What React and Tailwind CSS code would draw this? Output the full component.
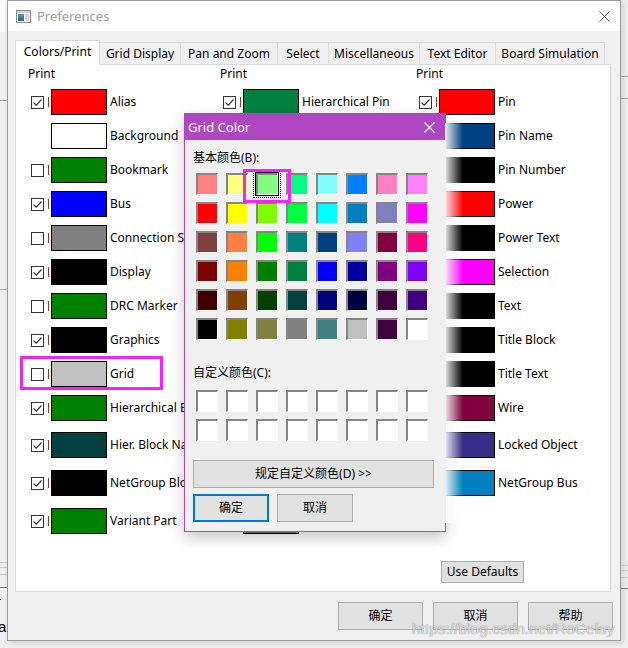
import React from 'react';

const leftRows = [
  { label: 'Alias', color: '#ff0000', cb: true, mt: '' },
  { label: 'Background', color: '#ffffff', cb: null, mt: 'mt-[8px]' },
  { label: 'Bookmark', color: '#008000', cb: false, mt: 'mt-[8px]' },
  { label: 'Bus', color: '#0000ff', cb: true, mt: 'mt-[8px]' },
  { label: 'Connection Stub', color: '#808080', cb: false, mt: 'mt-[8px]' },
  { label: 'Display', color: '#000000', cb: true, mt: 'mt-[8px]' },
  { label: 'DRC Marker', color: '#008000', cb: false, mt: 'mt-[8px]' },
  { label: 'Graphics', color: '#000000', cb: true, mt: 'mt-[8px]' },
  { label: 'Grid', color: '#c0c0c0', cb: false, mt: 'mt-[8px]', hl: true },
  { label: 'Hierarchical Block', color: '#008000', cb: true, mt: 'mt-[8px]' },
  { label: 'Hier. Block Name', color: '#004040', cb: true, mt: 'mt-[11px]' },
  { label: 'NetGroup Block', color: '#000000', cb: true, mt: 'mt-[12px]' },
  { label: 'Variant Part', color: '#008000', cb: true, mt: 'mt-[12px]' },
];

const midRows = [
  { label: 'Hierarchical Pin', color: '#008040', cb: true, mt: '' },
  { label: 'Junction', color: '#0000ff', cb: true, mt: 'mt-[8px]' },
  { label: 'Net Alias', color: '#008000', cb: true, mt: 'mt-[8px]' },
  { label: 'NetGroup Pin', color: '#000000', cb: true, mt: 'mt-[8px]' },
  { label: 'No Connect', color: '#000000', cb: true, mt: 'mt-[8px]' },
  { label: 'Off-Page', color: '#008000', cb: true, mt: 'mt-[8px]' },
  { label: 'Part', color: '#800000', cb: true, mt: 'mt-[8px]' },
  { label: 'Part Body', color: '#ffffc0', cb: true, mt: 'mt-[8px]' },
  { label: 'Part Ref', color: '#000000', cb: true, mt: 'mt-[8px]' },
  { label: 'Part Value', color: '#000000', cb: true, mt: 'mt-[8px]' },
  { label: 'Part Text', color: '#000000', cb: true, mt: 'mt-[11px]' },
  { label: 'Power Pin', color: '#000000', cb: true, mt: 'mt-[12px]' },
  { label: 'Pin Shape', color: '#808080', cb: true, mt: 'mt-[12px]' },
];

const rightRows = [
  { label: 'Pin', color: '#ff0000', cb: true, mt: '' },
  { label: 'Pin Name', color: '#004080', cb: true, mt: 'mt-[8px]' },
  { label: 'Pin Number', color: '#000000', cb: true, mt: 'mt-[8px]' },
  { label: 'Power', color: '#ff0000', cb: true, mt: 'mt-[8px]' },
  { label: 'Power Text', color: '#000000', cb: true, mt: 'mt-[8px]' },
  { label: 'Selection', color: '#ff00ff', cb: true, mt: 'mt-[8px]' },
  { label: 'Text', color: '#000000', cb: true, mt: 'mt-[8px]' },
  { label: 'Title Block', color: '#000000', cb: true, mt: 'mt-[8px]' },
  { label: 'Title Text', color: '#000000', cb: true, mt: 'mt-[8px]' },
  { label: 'Wire', color: '#800040', cb: true, mt: 'mt-[8px]' },
  { label: 'Locked Object', color: '#372c88', cb: true, mt: 'mt-[11px]' },
  { label: 'NetGroup Bus', color: '#0080c0', cb: true, mt: 'mt-[12px]' },
];

const basic = [
  '#ff8080', '#ffff80', '#80ff80', '#00ff80', '#80ffff', '#0080ff', '#ff80c0', '#ff80ff',
  '#ff0000', '#ffff00', '#80ff00', '#00ff40', '#00ffff', '#0080c0', '#8080c0', '#ff00ff',
  '#804040', '#ff8040', '#00ff00', '#008080', '#004080', '#8080ff', '#800040', '#ff0080',
  '#800000', '#ff8000', '#008000', '#008040', '#0000ff', '#0000a0', '#800080', '#8000ff',
  '#400000', '#804000', '#004000', '#004040', '#000080', '#000040', '#400040', '#400080',
  '#000000', '#808000', '#808040', '#808080', '#408080', '#c0c0c0', '#400040', '#ffffff',
];

function Check({ checked }) {
  return (
    <div className="w-[13px] h-[13px] border border-[#333333] bg-white flex items-center justify-center">
      {checked && (
        <svg width="11" height="11" viewBox="0 0 11 11">
          <path d="M1.5 5.5 L4.2 8.2 L9.5 2.5" fill="none" stroke="#333333" strokeWidth="1.2" />
        </svg>
      )}
    </div>
  );
}

function Row({ r }) {
  return (
    <div className={`relative h-[26px] flex items-center ${r.mt}`}>
      {r.hl && (
        <div className="absolute left-[-8px] top-[-5px] w-[143px] h-[34px] border-[3px] border-[#f224f2]" />
      )}
      <div className="ml-[3px] w-[13px] h-[13px]">{r.cb !== null && <Check checked={r.cb} />}</div>
      <div className={`ml-[4px] w-px h-[10px] ${r.cb !== null ? 'bg-[#a0341c]' : ''}`} />
      <div className="ml-[2px] w-[56px] h-[26px] border border-black" style={{ backgroundColor: r.color }} />
      <div className="ml-[3px] whitespace-nowrap leading-[16px]">{r.label}</div>
    </div>
  );
}

function Column({ rows, w }) {
  return (
    <div className={`flex flex-col ${w}`}>
      <div className="h-[16px] leading-[16px]">Print</div>
      <div className="mt-[7px] flex flex-col">
        {rows.map((r, i) => (
          <Row key={i} r={r} />
        ))}
      </div>
    </div>
  );
}

function Cell({ color }) {
  return (
    <div
      className="w-[22px] h-[22px] border-t-2 border-l-2 border-r border-b border-t-[#858585] border-l-[#858585] border-r-white border-b-white"
      style={{ backgroundColor: color }}
    />
  );
}

function Tab({ label, w, selected }) {
  if (selected) {
    return (
      <div className={`relative z-10 -mb-px h-[25px] ${w} bg-white border border-b-0 border-[#d9d9d9] flex items-start justify-center pt-[3px] leading-[16px]`}>
        {label}
      </div>
    );
  }
  return (
    <div className={`-ml-px h-[22px] ${w} bg-[#f0f0f0] border border-b-0 border-[#d9d9d9] flex items-center justify-center leading-[16px]`}>
      {label}
    </div>
  );
}

function Btn({ children, w, h, extra = '' }) {
  return (
    <div className={`${w} ${h} bg-[#e1e1e1] border border-[#adadad] flex items-center justify-center ${extra}`}>{children}</div>
  );
}

export default function App() {
  return (
    <div className="relative w-[628px] h-[648px] bg-[#f0f0f0] flex overflow-hidden text-[12px] text-black font-['Noto_Sans','Noto_Sans_CJK_SC',sans-serif]">
      {/* background app, left strip */}
      <div className="w-[7px] flex flex-col bg-[#f0f0f0] overflow-hidden">
        <div className="h-[32px] bg-[#fbfbfb]" />
        <div className="h-[68px]" />
        <div className="h-px bg-[#a0a0a0]" />
        <div className="h-[188px]" />
        <div className="h-px bg-[#b0b0b0]" />
        <div className="h-[272px]" />
        <div className="h-px bg-[#c8c8c8]" />
        <div className="h-[4px]" />
        <div className="h-px bg-[#c8c8c8]" />
        <div className="h-[6px]" />
        <div className="h-px bg-[#c8c8c8]" />
        <div className="h-[12px]" />
        <div className="h-px bg-[#777777]" />
        <div className="h-[11px]" />
        <div className="h-px w-px bg-black" />
        <div className="h-[18px]" />
        <div className="h-[18px] leading-[18px] text-[15px] -ml-[2px] font-['Liberation_Sans',sans-serif]">a</div>
      </div>

      {/* main window */}
      <div className="w-[614px] h-[641px] border border-[#9b9b9b] bg-[#f0f0f0] flex flex-col shadow-[2px_2px_6px_rgba(0,0,0,0.15)]">
        <div className="h-[30px] bg-white flex items-center pl-[8px] pr-[10px]">
          <svg width="15" height="13" viewBox="0 0 15 13">
            <defs>
              <linearGradient id="ig" x1="0" y1="0" x2="0" y2="1">
                <stop offset="0" stopColor="#4aa0a8" />
                <stop offset="1" stopColor="#2d5d8c" />
              </linearGradient>
            </defs>
            <rect x="0.5" y="0.5" width="14" height="12" fill="#ffffff" stroke="#8a8a8a" />
            <rect x="1" y="1" width="13" height="2" fill="#c9d2db" />
            <rect x="2" y="4" width="6" height="7" fill="url(#ig)" />
            <rect x="9" y="4" width="4" height="7" fill="#d5d5d5" />
          </svg>
          <div className="ml-[6px] text-[13px] text-[#9a9a9a] leading-[16px]">Preferences</div>
          <div className="flex-1" />
          <svg width="11" height="11" viewBox="0 0 11 11">
            <path d="M0.5 0.5 L10.5 10.5 M10.5 0.5 L0.5 10.5" stroke="#555555" strokeWidth="1" />
          </svg>
        </div>

        <div className="pt-[9px] pl-[7px] flex flex-col">
          <div className="h-[24px] flex items-end">
            <Tab label="Colors/Print" w="w-[85px]" selected />
            <Tab label="Grid Display" w="w-[82px]" />
            <Tab label="Pan and Zoom" w="w-[98px]" />
            <Tab label="Select" w="w-[52px]" />
            <Tab label="Miscellaneous" w="w-[92px]" />
            <Tab label="Text Editor" w="w-[77px]" />
            <Tab label="Board Simulation" w="w-[110px]" />
          </div>
          <div className="w-[596px] h-[528px] border border-[#d9d9d9] bg-white flex flex-col pt-[1px] pl-[12px]">
            <div className="flex">
              <Column rows={leftRows} w="w-[192px]" />
              <Column rows={midRows} w="w-[196px]" />
              <Column rows={rightRows} w="w-[170px]" />
            </div>
            <Btn w="w-[83px]" h="h-[22px]" extra="mt-[27px] ml-[413px]">Use Defaults</Btn>
          </div>
          <div className="mt-[10px] flex justify-end gap-[10px] pr-[7px]">
            <Btn w="w-[85px]" h="h-[28px]">确定</Btn>
            <Btn w="w-[85px]" h="h-[28px]">取消</Btn>
            <Btn w="w-[85px]" h="h-[28px]">帮助</Btn>
          </div>
        </div>
      </div>

      {/* background app, right strip */}
      <div className="flex-1 flex flex-col">
        <div className="h-[76px]" />
        <div className="h-px bg-[#a0a0a0]" />
        <div className="h-[21px]" />
        <div className="h-px bg-[#a0a0a0]" />
        <div className="h-[466px]" />
        <div className="h-px bg-[#c8c8c8]" />
        <div className="h-[4px]" />
        <div className="h-px bg-[#c8c8c8]" />
        <div className="h-[6px]" />
        <div className="h-px bg-[#c8c8c8]" />
        <div className="h-[10px]" />
        <div className="h-px bg-[#777777]" />
      </div>

      {/* Grid Color dialog */}
      <div className="absolute left-[184px] top-[113px] w-[262px] h-[419px] border border-[#ae47c1] bg-[#f0f0f0] flex flex-col shadow-[0_6px_14px_rgba(0,0,0,0.22)]">
        <div className="absolute left-full top-[9px] w-[18px] h-[400px] bg-gradient-to-r from-white/90 to-white/0" />
        <div className="h-[26px] bg-[#ae47c1] flex items-center pl-[3px] pr-[10px] text-white">
          <div className="text-[13px] leading-[16px]">Grid Color</div>
          <div className="flex-1" />
          <svg width="11" height="11" viewBox="0 0 11 11">
            <path d="M0.5 0.5 L10.5 10.5 M10.5 0.5 L0.5 10.5" stroke="#ffffff" strokeWidth="1.2" />
          </svg>
        </div>
        <div className="relative flex flex-col">
          <div className="mt-[10px] ml-[8px] h-[16px] leading-[16px]">基本颜色(B):</div>
          <div className="mt-[7px] ml-[11px] grid grid-cols-[repeat(8,22px)] gap-x-[8px] gap-y-[7px]">
            {basic.map((c, i) => (
              <div key={i} className="relative">
                {i === 2 && (
                  <>
                    <div className="absolute -inset-[3px] border border-dotted border-black" />
                    <div className="absolute -inset-[1px] border border-black" />
                  </>
                )}
                <Cell color={c} />
              </div>
            ))}
          </div>
          <div className="absolute left-[58px] top-[29px] w-[48px] h-[34px] border-[3px] border-[#f224f2]" />
          <div className="mt-[25px] ml-[8px] h-[16px] leading-[16px]">自定义颜色(C):</div>
          <div className="mt-[9px] ml-[11px] grid grid-cols-[repeat(8,22px)] gap-x-[8px] gap-y-[7px]">
            {Array.from({ length: 16 }).map((_, i) => (
              <Cell key={i} color="#ffffff" />
            ))}
          </div>
          <Btn w="w-[241px]" h="h-[28px]" extra="mt-[19px] ml-[8px]">规定自定义颜色(D) &gt;&gt;</Btn>
          <div className="mt-[6px] ml-[8px] flex gap-[8px]">
            <div className="w-[76px] h-[28px] bg-[#e1e1e1] border-2 border-[#0078d7] flex items-center justify-center">确定</div>
            <Btn w="w-[76px]" h="h-[28px]">取消</Btn>
          </div>
        </div>
      </div>

      {/* watermark */}
      <div className="absolute left-[412px] top-[620px] text-[15.5px] leading-[18px] font-['Liberation_Sans',sans-serif] text-white/75 [text-shadow:0_0_1px_rgba(0,0,0,0.6)] whitespace-nowrap">
        https://blog.csdn.net/RoCelay
      </div>
    </div>
  );
}
